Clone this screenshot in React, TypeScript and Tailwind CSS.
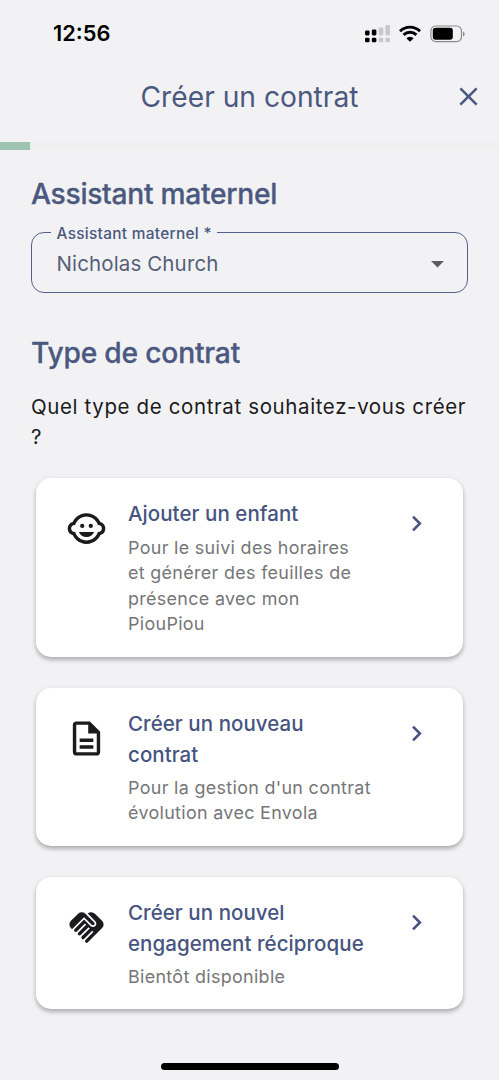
import type { ReactNode } from "react";
import { MdArrowDropDown, MdChildCare, MdChevronRight, MdClose, MdHandshake, MdOutlineDescription } from "react-icons/md";

function StatusIcons() {
  return (
    <div className="flex items-center pt-px">
      <svg width="26" height="18" viewBox="0 0 26 18" className="mr-[8px]">
        <g fill="#000">
          <rect x="0" y="5.5" width="4.6" height="5" rx="1.4" />
          <rect x="6.8" y="4.4" width="4.6" height="6.1" rx="1.4" />
          <rect x="0" y="12.7" width="4.6" height="4.6" rx="1.4" />
          <rect x="6.8" y="12.7" width="4.6" height="4.6" rx="1.4" />
        </g>
        <g fill="#c8c8ca">
          <rect x="13.7" y="2.4" width="4.6" height="8.1" rx="1.4" />
          <rect x="20.4" y="0" width="4.6" height="10.5" rx="1.4" />
          <rect x="13.7" y="12.7" width="4.6" height="4.6" rx="1.4" />
          <rect x="20.4" y="12.7" width="4.6" height="4.6" rx="1.4" />
        </g>
      </svg>
      <svg width="22" height="17" viewBox="0 0 22 17" className="mr-[9px]" fill="none" stroke="#000" strokeWidth="2.9">
        <path d="M1 6.2A14.2 14.2 0 0 1 21 6.2" />
        <path d="M4.6 9.9A9.2 9.2 0 0 1 17.4 9.9" />
        <path d="M7.3 13.2A5.3 5.3 0 0 1 14.7 13.2L11 16.8Z" fill="#000" stroke="none" />
      </svg>
      <svg width="36" height="18" viewBox="0 0 36 18">
        <rect x="0.9" y="1" width="30.6" height="15.6" rx="4.8" fill="none" stroke="#8b8b8d" strokeWidth="1.2" />
        <rect x="2.8" y="2.8" width="20" height="12" rx="2.8" fill="#000" />
        <path d="M33 6.4c2.2.8 2.2 4 0 4.8z" fill="#8b8b8d" />
      </svg>
    </div>
  );
}

function OptionCard({ icon, title, children }: { icon: ReactNode; title: string; children: ReactNode }) {
  return (
    <button className="flex w-full items-start rounded-[15px] bg-white pt-[21.3px] pb-[20px] pl-[31px] text-left shadow-[0_3px_4px_rgba(0,0,0,0.24),0_1px_6px_rgba(0,0,0,0.08)]">
      <span className="mt-[9px] mr-[20.7px] ml-[-0.7px] text-[41px] text-[#1b1b1d]">{icon}</span>
      <span className="flex w-[250px] flex-col gap-[4.7px]">
        <span className="text-[20.5px] leading-[30.6px] font-medium tracking-[0.05px] text-[#46547f]">{title}</span>
        <span className="text-[17.9px] leading-[25.6px] tracking-[0.33px] text-[#767678]">{children}</span>
      </span>
      <MdChevronRight className="mt-[9px] ml-[23px] text-[31px] text-[#46547f]" />
    </button>
  );
}

export default function App() {
  return (
    <main className="flex h-[1080px] w-[499px] flex-col overflow-hidden bg-[#f2f2f4] font-['Inter','Liberation_Sans',sans-serif]">
      <div className="flex h-[66px] items-center justify-between pr-[33px] pl-[53px]">
        <span className="text-[21.8px] font-semibold text-black">12:56</span>
        <StatusIcons />
      </div>
      <header className="grid h-[76px] grid-cols-[62px_1fr_62px] items-center pb-[15px] text-[#4b5880]">
        <span />
        <h1 className="pt-px text-center text-[28.2px] font-normal">Créer un contrat</h1>
        <button aria-label="Fermer" className="justify-self-center text-[31px]">
          <MdClose />
        </button>
      </header>
      <div className="h-[8px] bg-[#efefef]">
        <div className="h-full w-[29.5px] bg-[#9cc3b0]" />
      </div>
      <section className="px-[31px] pt-[26px]">
        <h2 className="text-[28.2px] leading-[36px] font-medium tracking-[-0.28px] text-[#4b5880] [-webkit-text-stroke:0.3px_#4b5880]">Assistant maternel</h2>
        <fieldset className="mt-[9.5px] h-[71.5px] rounded-[13px] border-[1.5px] border-[#565f8c] pl-[19px]">
          <legend className="px-[5.5px] pt-[2.5px] text-[15.4px] leading-[20px] font-medium tracking-[0.3px] text-[#4b5880]">Assistant maternel *</legend>
          <div className="flex h-[39px] items-center justify-between pr-[14px] pl-[5.5px]">
            <span className="pt-[1.5px] text-[20.5px] tracking-[0.13px] text-[#565f78]">Nicholas Church</span>
            <MdArrowDropDown className="text-[31px] text-[#5c5c60]" />
          </div>
        </fieldset>
        <h2 className="mt-[42px] text-[28.2px] leading-[36px] font-medium tracking-[-0.2px] text-[#4b5880] [-webkit-text-stroke:0.3px_#4b5880]">Type de contrat</h2>
        <p className="mt-[21px] text-[20.5px] leading-[30px] tracking-[0.62px] text-[#1b1b1d]">Quel type de contrat souhaitez-vous créer ?</p>
      </section>
      <section className="mt-[26px] flex flex-col gap-[30.7px] px-[36px]">
        <OptionCard icon={<MdChildCare />} title="Ajouter un enfant">
          Pour le suivi des horaires<br />et générer des feuilles de<br />présence avec mon<br />PiouPiou
        </OptionCard>
        <OptionCard icon={<MdOutlineDescription />} title="Créer un nouveau contrat">
          Pour la gestion d'un contrat<br />évolution avec Envola
        </OptionCard>
        <OptionCard icon={<MdHandshake />} title="Créer un nouvel engagement réciproque">
          Bientôt disponible
        </OptionCard>
      </section>
      <div className="mt-auto mb-[10.5px] h-[6.5px] w-[178px] self-center rounded-full bg-black" />
    </main>
  );
}
